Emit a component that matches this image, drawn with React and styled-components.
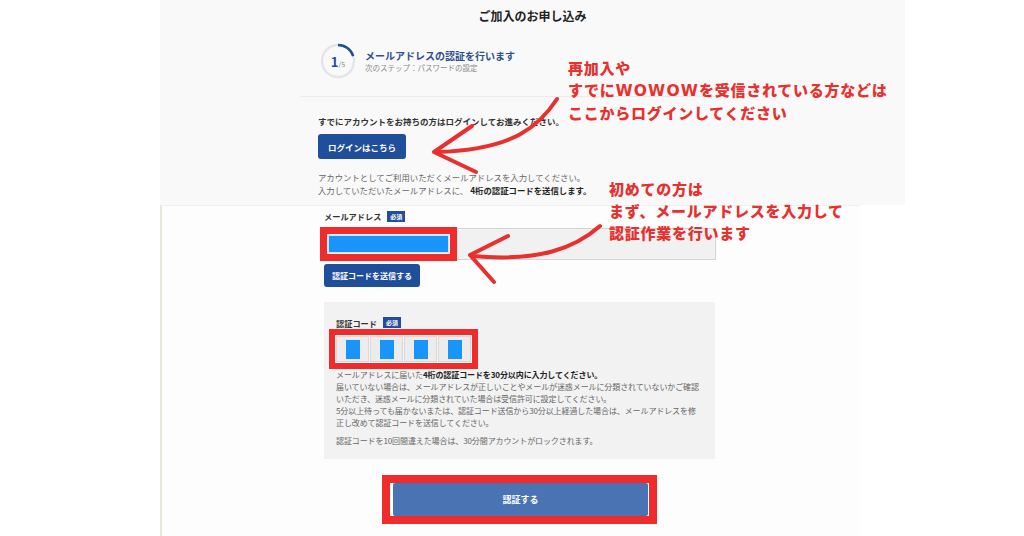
import React from "react";
import styled, { createGlobalStyle } from "styled-components";

const GlobalStyle = createGlobalStyle`
  html, body {
    margin: 0;
    padding: 0;
    background: #fff;
  }
  body {
    font-family: "Noto Sans CJK JP", "Noto Sans", sans-serif;
    color: #333;
  }
`;

const Page = styled.div`
  position: relative;
  width: 1024px;
  height: 536px;
  overflow: hidden;
  background: #fff;
`;

/* ---------- top screenshot ---------- */

const TopShot = styled.section`
  margin-left: 160px;
  width: 745px;
  height: 205px;
  background: #f9f9f9;
  overflow: hidden;
`;

const Title = styled.h1`
  margin: 8px 0 0;
  font-size: 12px;
  line-height: 16px;
  font-weight: 700;
  text-align: center;
  color: #222;
`;

const TopBody = styled.div`
  padding-left: 158px;
`;

const StepRow = styled.div`
  display: flex;
  align-items: center;
  gap: 9px;
  margin-top: 19px;
  margin-left: 2px;
`;

const Ring = styled.div`
  display: grid;
  place-items: center;
  width: 36px;
  height: 36px;
  & > * {
    grid-area: 1 / 1;
  }
`;

const RingNum = styled.span`
  font-size: 13px;
  font-weight: 700;
  color: #1f4e9a;
  line-height: 1;
  small {
    font-size: 7px;
    font-weight: 400;
    color: #888;
  }
`;

const StepText = styled.div`
  display: flex;
  flex-direction: column;
  gap: 1px;
`;

const StepTitle = styled.div`
  font-size: 10px;
  line-height: 13px;
  font-weight: 700;
  color: #2c4f8e;
`;

const StepNext = styled.div`
  font-size: 7.5px;
  line-height: 10px;
  color: #888;
`;

const Divider = styled.hr`
  margin: 17px 0 0 -18px;
  width: 420px;
  border: 0;
  border-top: 1px solid #ececec;
`;

const Lead = styled.p`
  margin: 18px 0 0;
  font-size: 8.5px;
  line-height: 12px;
  font-weight: 700;
  color: #333;
`;

const Button = styled.button`
  display: inline-flex;
  align-items: center;
  justify-content: center;
  height: ${(p) => p.$h || 24}px;
  padding: 0 ${(p) => p.$px || 10}px;
  border: 0;
  border-radius: 3px;
  background: ${(p) => p.$bg || "#1f4e9a"};
  color: #fff;
  font-family: inherit;
  font-size: ${(p) => p.$fs || 8.5}px;
  font-weight: 700;
  white-space: nowrap;
`;

const LoginButton = styled(Button)`
  margin-top: 7px;
  width: 88px;
`;

const Note = styled.p`
  margin: 12px 0 0;
  font-size: 8.4px;
  line-height: 13px;
  color: #666;
  b {
    color: #222;
  }
`;

/* ---------- bottom screenshot ---------- */

const BottomShot = styled.section`
  margin-left: 160px;
  width: 700px;
  height: 331px;
  box-sizing: border-box;
  border-top: 1px solid #f0f0f0;
  border-left: 2px solid #e3e9da;
  background: #fdfdfd;
  padding: 4px 0 0 162px;
`;

const FieldLabel = styled.div`
  display: flex;
  align-items: center;
  gap: 6px;
  font-size: 8.2px;
  line-height: 12px;
  font-weight: 700;
  color: #333;
`;

const Badge = styled.span`
  display: inline-block;
  padding: 0 3px;
  background: #1f4e9a;
  color: #fff;
  font-size: 6px;
  line-height: 11px;
  font-weight: 700;
`;

const InputBox = styled.div`
  position: relative;
  margin: 6px 0 0 -2px;
  width: 394px;
  height: 32px;
  box-sizing: border-box;
  background: #f1f1f1;
  border: 1px solid #d4d4d4;
`;

const RedMark = styled.div`
  position: absolute;
  left: ${(p) => p.$l}px;
  top: ${(p) => p.$t}px;
  width: ${(p) => p.$w}px;
  height: ${(p) => p.$hh}px;
  box-sizing: border-box;
  border: ${(p) => p.$b || 7}px solid #ef2b2b;
  padding: 1px;
`;

const Masked = styled.div`
  height: 100%;
  box-sizing: border-box;
  background: #1894fb;
  border: 1px solid #cfe5fb;
`;

const SendButton = styled(Button)`
  margin-top: 4px;
  width: 96px;
`;

const CodeBox = styled.div`
  margin: 15px 0 0 0;
  width: 391px;
  height: 157px;
  box-sizing: border-box;
  background: #f2f2f2;
  padding: 15px 12px 0;
`;

const CodeLabel = styled(FieldLabel)`
  line-height: 10px;
`;

const CodeFrame = styled.div`
  display: flex;
  gap: 1px;
  margin: 1px 0 0 -7px;
  width: 149px;
  height: 40px;
  box-sizing: border-box;
  border: 6px solid #ef2b2b;
  padding: 1px;
  background: #f6f6f6;
`;

const CodeCell = styled.div`
  flex: 1;
  display: flex;
  align-items: center;
  justify-content: center;
  background: #ececec;
  border: 1px solid #d8d8d8;
  &::after {
    content: "";
    width: 14px;
    height: 19px;
    background: #1894fb;
  }
`;

const Help = styled.div`
  margin-top: 0;
  font-size: 8px;
  line-height: 12px;
  color: #666;
  white-space: nowrap;
  letter-spacing: -0.1px;
  p {
    margin: 0;
  }
  p + p {
    margin-top: 6px;
  }
  b {
    color: #222;
  }
`;

const SubmitFrame = styled.div`
  margin: 16px 0 0 58px;
  width: 275px;
  height: 49px;
  box-sizing: border-box;
  border: 8px solid #ef2b2b;
  background: #fff;
  padding: 0 1px 0 3px;
`;

const SubmitButton = styled(Button)`
  width: 100%;
  height: 100%;
  border-radius: 2px;
`;

/* ---------- annotations ---------- */

const Annotation = styled.div`
  position: absolute;
  left: ${(p) => p.$x}px;
  top: ${(p) => p.$y}px;
  font-family: "Noto Sans CJK JP", sans-serif;
  font-size: 15px;
  line-height: 22px;
  font-weight: 900;
  color: #e8302e;
  letter-spacing: 0.75px;
  white-space: nowrap;
`;

const Latin = styled.span`
  font-family: "DejaVu Sans", sans-serif;
  font-weight: 700;
  font-size: 15.5px;
  letter-spacing: 1.2px;
`;

const Arrows = styled.svg`
  position: absolute;
  left: 0;
  top: 0;
  pointer-events: none;
`;

function ProgressRing() {
  return (
    <Ring>
      <svg width="36" height="36" viewBox="0 0 36 36">
        <circle cx="18" cy="18" r="16" fill="none" stroke="#e3e5e9" strokeWidth="2.4" />
        <path d="M18 2 A16 16 0 0 1 33.2 13.06" fill="none" stroke="#1f4e9a" strokeWidth="2.4" />
      </svg>
      <RingNum>
        1<small>/5</small>
      </RingNum>
    </Ring>
  );
}

export default function App() {
  return (
    <Page>
      <GlobalStyle />
      <TopShot>
        <Title>ご加入のお申し込み</Title>
        <TopBody>
          <StepRow>
            <ProgressRing />
            <StepText>
              <StepTitle>メールアドレスの認証を行います</StepTitle>
              <StepNext>次のステップ：パスワードの設定</StepNext>
            </StepText>
          </StepRow>
          <Divider />
          <Lead>すでにアカウントをお持ちの方はログインしてお進みください。</Lead>
          <LoginButton $h={25}>ログインはこちら</LoginButton>
          <Note>
            アカウントとしてご利用いただくメールアドレスを入力してください。
            <br />
            入力していただいたメールアドレスに、 <b>4桁の認証コードを送信します。</b>
          </Note>
        </TopBody>
      </TopShot>

      <BottomShot>
        <FieldLabel>
          メールアドレス <Badge>必須</Badge>
        </FieldLabel>
        <InputBox>
          <RedMark $l={-3} $t={-2} $w={137} $hh={34}>
            <Masked />
          </RedMark>
        </InputBox>
        <SendButton $h={23} $fs={8}>認証コードを送信する</SendButton>

        <CodeBox>
          <CodeLabel>
            認証コード <Badge>必須</Badge>
          </CodeLabel>
          <CodeFrame>
            <CodeCell />
            <CodeCell />
            <CodeCell />
            <CodeCell />
          </CodeFrame>
          <Help>
            <p>
              メールアドレスに届いた<b>4桁の認証コードを30分以内に入力してください。</b>
              <br />
              届いていない場合は、メールアドレスが正しいことやメールが迷惑メールに分類されていないかご確認
              <br />
              いただき、迷惑メールに分類されていた場合は受信許可に設定してください。
              <br />
              5分以上待っても届かないまたは、認証コード送信から30分以上経過した場合は、メールアドレスを修
              <br />
              正し改めて認証コードを送信してください。
            </p>
            <p>認証コードを10回間違えた場合は、30分間アカウントがロックされます。</p>
          </Help>
        </CodeBox>

        <SubmitFrame>
          <SubmitButton $bg="#4a73b4" $fs={9}>認証する</SubmitButton>
        </SubmitFrame>
      </BottomShot>

      <Annotation $x={568} $y={57}>
        再加入や
        <br />
        すでに<Latin>WOWOW</Latin>を受信されている方などは
        <br />
        ここからログインしてください
      </Annotation>
      <Annotation $x={609} $y={178}>
        初めての方は
        <br />
        まず、メールアドレスを入力して
        <br />
        認証作業を行います
      </Annotation>

      <Arrows width="1024" height="536" viewBox="0 0 1024 536">
        <g fill="none" stroke="#e8302e" strokeWidth="4" strokeLinecap="round" strokeLinejoin="round">
          <path d="M557 99 C 540 125, 515 150, 436 152" />
          <path d="M472 126 L 434 152 L 476 172" />
          <path d="M600 226 C 575 248, 540 262, 472 256" />
          <path d="M508 236 L 470 255 L 494 282" />
        </g>
      </Arrows>
    </Page>
  );
}
